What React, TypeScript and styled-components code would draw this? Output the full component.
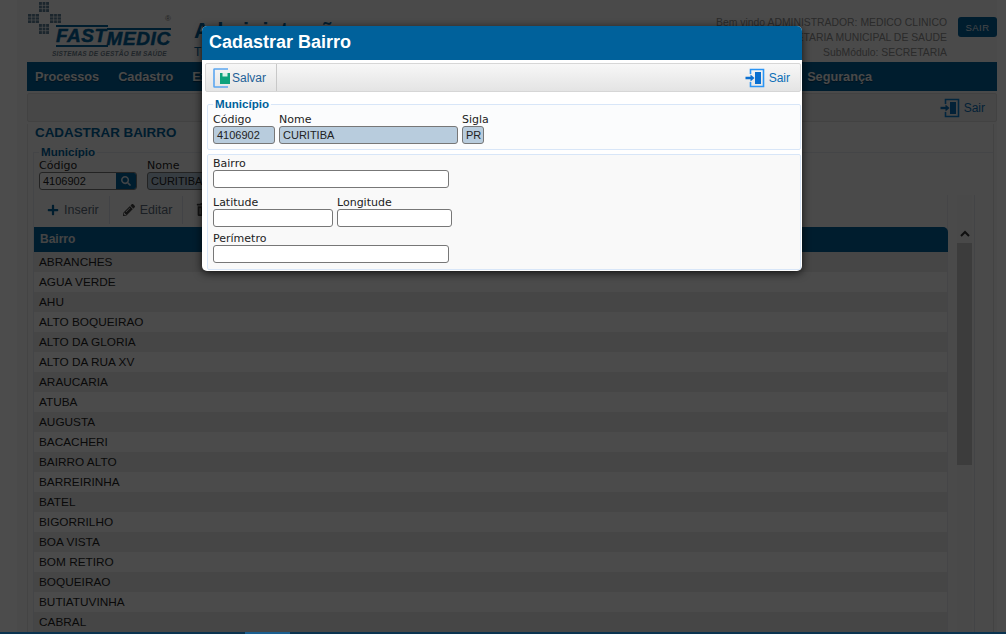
import styled, { createGlobalStyle } from 'styled-components';
import { FaPencilAlt, FaPlus, FaSearch, FaTrashAlt } from 'react-icons/fa';

const GlobalStyle = createGlobalStyle`
  html, body {
    margin: 0;
    padding: 0;
    height: 100%;
    overflow: hidden;
    background: #fff;
    font-family: "Liberation Sans", Arial, sans-serif;
  }
  * { box-sizing: border-box; }
`;

const Page = styled.div`
  width: 1006px;
  height: 634px;
  position: relative;
  overflow: hidden;
  background: #ffffff;
`;

const Shell = styled.div`
  width: 980px;
  height: 632px;
  margin-left: 17px;
  padding-left: 10px;
  background: #f8f8f8;
  overflow: hidden;
`;

const Header = styled.header`
  height: 62px;
  display: flex;
  align-items: flex-start;
  justify-content: space-between;
`;

const Logo = styled.div`
  position: relative;
  width: 145px;
  height: 62px;
`;

const LogoMark = styled.svg`
  position: absolute;
  left: 0;
  top: 0;
`;

const LogoName = styled.div`
  position: absolute;
  left: 29px;
  top: 25px;
  display: flex;
  align-items: flex-start;
  color: #00619b;
  font-weight: 700;
  font-style: italic;
  white-space: nowrap;
  -webkit-text-stroke: 0.5px #00619b;
`;

const LogoFast = styled.span`
  font-size: 19px;
  line-height: 18px;
  letter-spacing: 0.5px;
  border-top: 2px solid #00619b;
  border-bottom: 2px solid #00619b;
  padding-right: 1px;
`;

const LogoMedic = styled.span`
  font-size: 19px;
  line-height: 18px;
  margin-top: 3px;
  letter-spacing: 0.6px;
  border-top: 2px solid #00619b;
  margin-left: -1px;
`;

const LogoTag = styled.div`
  position: absolute;
  left: 25px;
  top: 49px;
  color: #6d7f8c;
  font-size: 6.5px;
  line-height: 9px;
  font-weight: 700;
  font-style: italic;
  letter-spacing: 0.2px;
  white-space: nowrap;
`;

const LogoReg = styled.span`
  position: absolute;
  left: 138px;
  top: 14px;
  color: #777;
  font-size: 8px;
`;

const AppTitle = styled.div`
  flex: 1;
  padding: 20px 0 0 22px;
  color: #00619b;
  font-size: 22px;
  line-height: 22px;
  font-weight: 700;
  white-space: nowrap;
`;

const AppSubtitle = styled.div`
  margin-top: 4px;
  color: #00619b;
  font-size: 12px;
  line-height: 12px;
  font-weight: 400;
`;

const UserBox = styled.div`
  display: flex;
  align-items: flex-start;
  gap: 11px;
  padding-top: 15px;
`;

const UserLines = styled.div`
  color: #8f8f8f;
  font-size: 10.4px;
  line-height: 15px;
  text-align: right;
  white-space: nowrap;
`;

const TopExit = styled.button`
  width: 39px;
  height: 20px;
  margin-top: 2px;
  border: 0;
  border-radius: 3px;
  background: #00619b;
  color: #e0e8ef;
  font-family: "Liberation Sans", Arial, sans-serif;
  font-size: 9.5px;
  letter-spacing: 0.5px;
  padding: 0;
`;

const Nav = styled.nav`
  height: 29px;
  background: #00619b;
  display: flex;
  align-items: center;
  padding-left: 8px;
  gap: 19px;
`;

const NavItem = styled.span<{ $left?: number }>`
  color: #f4f4f4;
  font-size: 12.7px;
  font-weight: 700;
  white-space: nowrap;
  margin-left: ${({ $left }) => $left ?? 0}px;
  text-shadow: 0 1px 1px rgba(0, 0, 0, 0.4);
`;

const ActionBar = styled.div`
  height: 29px;
  margin-top: 2px;
  border: 1px solid #dcdcdc;
  border-radius: 2px;
  background: #efefef;
  display: flex;
  align-items: center;
  justify-content: flex-end;
  padding-right: 11px;
`;

const ExitLabel = styled.span<{ $color: string }>`
  color: ${({ $color }) => $color};
  font-size: 12px;
  margin-left: 4px;
`;

const Section = styled.section`
  margin-top: 2px;
  width: 967px;
  height: 512px;
  padding: 0 0 0 5px;
  border-left: 1px solid #e4e4e4;
  border-right: 1px solid #e2e2e2;
`;

const SectionTitle = styled.h2`
  margin: 0 0 0 2px;
  color: #00619b;
  font-size: 13.4px;
  line-height: 18px;
  font-weight: 700;
`;

const CityFieldset = styled.fieldset`
  margin: 4px 0 0;
  padding: 1px 0 0 5px;
  height: 49px;
  border: 1px solid #e4e8ee;
  border-width: 1px 0 0 1px;
  min-width: 0;
`;

const CityLegend = styled.legend`
  margin-left: 0;
  padding: 0 2px;
  color: #00619b;
  font-size: 11.6px;
  line-height: 12px;
  font-weight: 700;
`;

const FieldRow = styled.div<{ $gap?: number }>`
  display: flex;
  align-items: flex-start;
  gap: ${({ $gap }) => $gap ?? 4}px;
`;

const Field = styled.label<{ $width: number }>`
  display: block;
  width: ${({ $width }) => $width}px;
  flex: none;
`;

const FieldLabel = styled.span`
  display: block;
  color: #222;
  font-family: "DejaVu Sans", Verdana, sans-serif;
  font-size: 11px;
  line-height: 13px;
`;

const TextBox = styled.div<{ $readonly?: boolean }>`
  height: 18px;
  border: 1px solid #777;
  border-radius: 3px;
  background: ${({ $readonly }) => ($readonly ? '#b8ccdd' : '#ffffff')};
  color: #222;
  font-size: 11px;
  line-height: 16px;
  padding: 0 3px;
  white-space: nowrap;
  overflow: hidden;
`;

const SearchBox = styled(TextBox)`
  position: relative;
  padding-right: 22px;
`;

const SearchButton = styled.span`
  position: absolute;
  top: 0;
  right: 0;
  width: 20px;
  height: 16px;
  background: #00619b;
  color: #d8e2ea;
  display: flex;
  align-items: center;
  justify-content: center;
  font-size: 10px;
`;

const ListArea = styled.div`
  display: flex;
  height: 438px;
  width: 942px;
  border-left: 1px solid #e4e8ee;
  border-right: 1px solid #dfe3ea;
`;

const ListMain = styled.div`
  width: 914px;
  flex: none;
  border-right: 1px solid #e6e8ee;
`;

const ListToolbar = styled.div`
  height: 29px;
  margin-bottom: 3px;
  display: flex;
  align-items: center;
  font-size: 12.5px;
`;

const ListTool = styled.span`
  display: flex;
  align-items: center;
  gap: 5px;
  height: 28px;
  padding: 0 10px 0 13px;
  border-right: 1px solid #dde2ea;
  color: #5a6a78;
  svg { color: #00619b; font-size: 12px; }
`;

const PencilTool = styled(ListTool)`
  svg { color: #444; }
`;

const TrashTool = styled(ListTool)`
  border-right: 0;
  svg { color: #444; font-size: 13px; }
`;

const TableHead = styled.div`
  height: 25px;
  margin-right: -1px;
  background: #00619b;
  color: #e4e4e4;
  font-size: 12px;
  font-weight: 700;
  line-height: 25px;
  padding-left: 6px;
  border-radius: 0 5px 0 0;
`;

const Row = styled.div<{ $shade: boolean }>`
  height: 20px;
  line-height: 20px;
  padding-left: 5px;
  color: #1f1f1f;
  font-size: 11.8px;
  background: ${({ $shade }) => ($shade ? '#ebebeb' : '#fafafa')};
`;

const ScrollTrack = styled.div`
  width: 15px;
  margin-left: 9px;
  flex: none;
  background: #f4f4f4;
`;

const ScrollUp = styled.svg`
  display: block;
  margin: 35px auto 6px;
`;

const ScrollThumb = styled.div`
  height: 222px;
  background: #c9c9c9;
`;

const Overlay = styled.div`
  position: absolute;
  inset: 0;
  background: rgba(0, 0, 0, 0.7);
`;

const BottomStrip = styled.div`
  position: absolute;
  left: 0;
  right: 0;
  bottom: 0;
  height: 2px;
  background: #0b3450;
`;

const BottomMark = styled.div`
  position: absolute;
  left: 245px;
  width: 45px;
  bottom: 0;
  height: 2px;
  background: #1b5f90;
`;

const Modal = styled.div`
  position: absolute;
  left: 202px;
  top: 26px;
  width: 600px;
  height: 245px;
  background: #ffffff;
  border-radius: 5px;
  overflow: hidden;
  box-shadow: 0 2px 8px rgba(0, 0, 0, 0.75);
`;

const ModalHeader = styled.div`
  height: 34px;
  background: #00619b;
  color: #ffffff;
  font-size: 18px;
  font-weight: 700;
  line-height: 33px;
  padding-left: 7px;
`;

const ModalBar = styled.div`
  height: 29px;
  margin: 3px 1px 0 3px;
  border: 1px solid #d6d6d6;
  border-radius: 2px;
  background: linear-gradient(#f7f7f7, #e4e4e4);
  display: flex;
  align-items: center;
  justify-content: space-between;
`;

const SaveButton = styled.div`
  height: 27px;
  width: 71px;
  display: flex;
  align-items: center;
  gap: 1px;
  padding-left: 7px;
  border-right: 1px solid #c8c8c8;
  color: #1f5f97;
  font-size: 12px;
`;

const ExitButton = styled.div`
  display: flex;
  align-items: center;
  padding-right: 10px;
`;

const ModalBody = styled.div`
  padding: 7px 1px 0 5px;
`;

const ModalFieldset = styled.fieldset`
  margin: 0;
  padding: 4px 0 0 5px;
  height: 51px;
  border: 1px solid #d8e6f8;
  border-radius: 2px;
  min-width: 0;
  background: #fbfcfd;
`;

const ModalLegend = styled.legend`
  margin-left: 0;
  padding: 0 2px;
  color: #00619b;
  font-size: 11.6px;
  line-height: 10px;
  font-weight: 700;
`;

const FormPanel = styled.div`
  margin-top: 4px;
  height: 116px;
  padding: 2px 5px;
  border: 1px solid #d8e6f8;
  border-radius: 2px;
  background: #f9f9f9;
  display: flex;
  flex-direction: column;
  gap: 8px;
`;

const TightField = styled(Field)`
  margin-top: -3px;
`;

const ExitIcon = ({ color, frame }: { color: string; frame: string }) => (
  <svg width="20" height="20" viewBox="0 0 20 20" fill="none">
    <path d="M5.5 6V1.5H18.5V18.5H5.5V14" stroke={frame} strokeWidth="1.6" />
    <path d="M10 4H16V16H10Z" fill={color} />
    <path d="M0.5 10H6" stroke={color} strokeWidth="2.4" />
    <path d="M5.5 6.5L9.5 10L5.5 13.5Z" fill={color} />
  </svg>
);

const SaveIcon = () => (
  <svg width="18" height="20" viewBox="0 0 18 20" fill="none">
    <path d="M15 1H1.5Q1 1 1 1.5V18.5Q1 19 1.5 19H15" stroke="#5ba6f0" strokeWidth="1.6" />
    <path d="M7 5H17V16H7Z" fill="#0ea27c" />
    <path d="M9.5 5H14.5V8.5H9.5Z" fill="#d8f2e8" />
  </svg>
);

const LogoCross = () => {
  const squares = [
    [12, 2, 10, 10],
    [1, 14, 11, 9],
    [23, 14, 11, 9],
    [12, 24, 10, 10],
  ];
  return (
    <LogoMark width="36" height="36" viewBox="0 0 36 36">
      {squares.map(([x, y, w, h]) => (
        <g key={`${x}-${y}`}>
          <rect x={x} y={y} width={w} height={h} fill="#5f7f96" />
          <path
            d={`M${x} ${y + h / 3}H${x + w}M${x} ${y + (2 * h) / 3}H${x + w}M${x + w / 3} ${y}V${y + h}M${x + (2 * w) / 3} ${y}V${y + h}`}
            stroke="#fff"
            strokeWidth="0.7"
          />
        </g>
      ))}
    </LogoMark>
  );
};

const bairros = [
  'ABRANCHES', 'AGUA VERDE', 'AHU', 'ALTO BOQUEIRAO', 'ALTO DA GLORIA', 'ALTO DA RUA XV',
  'ARAUCARIA', 'ATUBA', 'AUGUSTA', 'BACACHERI', 'BAIRRO ALTO', 'BARREIRINHA', 'BATEL',
  'BIGORRILHO', 'BOA VISTA', 'BOM RETIRO', 'BOQUEIRAO', 'BUTIATUVINHA', 'CABRAL',
];

export default function App() {
  return (
    <Page>
      <GlobalStyle />
      <Shell>
        <Header>
          <Logo>
            <LogoCross />
            <LogoName>
              <LogoFast>FAST</LogoFast>
              <LogoMedic>MEDIC</LogoMedic>
            </LogoName>
            <LogoTag>SISTEMAS DE GESTÃO EM SAÚDE</LogoTag>
            <LogoReg>®</LogoReg>
          </Logo>
          <AppTitle>
            Administração
            <AppSubtitle>TFD</AppSubtitle>
          </AppTitle>
          <UserBox>
            <UserLines>
              Bem vindo ADMINISTRADOR: MEDICO CLINICO
              <br />
              SECRETARIA MUNICIPAL DE SAUDE
              <br />
              SubMódulo: SECRETARIA
            </UserLines>
            <TopExit>SAIR</TopExit>
          </UserBox>
        </Header>
        <Nav>
          <NavItem>Processos</NavItem>
          <NavItem>Cadastro</NavItem>
          <NavItem>Exames</NavItem>
          <NavItem $left={548}>Segurança</NavItem>
        </Nav>
        <ActionBar>
          <ExitIcon color="#0a6fb8" frame="#0a7fd0" />
          <ExitLabel $color="#0a6fb8">Sair</ExitLabel>
        </ActionBar>
        <Section>
          <SectionTitle>CADASTRAR BAIRRO</SectionTitle>
          <CityFieldset>
            <CityLegend>Município</CityLegend>
            <FieldRow $gap={10}>
              <Field $width={98}>
                <FieldLabel>Código</FieldLabel>
                <SearchBox>
                  4106902
                  <SearchButton><FaSearch /></SearchButton>
                </SearchBox>
              </Field>
              <Field $width={200}>
                <FieldLabel>Nome</FieldLabel>
                <TextBox $readonly>CURITIBA</TextBox>
              </Field>
            </FieldRow>
          </CityFieldset>
          <ListArea>
            <ListMain>
              <ListToolbar>
                <ListTool><FaPlus />Inserir</ListTool>
                <PencilTool><FaPencilAlt />Editar</PencilTool>
                <TrashTool><FaTrashAlt />Excluir</TrashTool>
              </ListToolbar>
              <TableHead>Bairro</TableHead>
              {bairros.map((name, i) => (
                <Row key={name} $shade={i % 2 === 0}>{name}</Row>
              ))}
            </ListMain>
            <ScrollTrack>
              <ScrollUp width="10" height="7" viewBox="0 0 10 7">
                <path d="M1 6L5 2L9 6" stroke="#333" strokeWidth="2" fill="none" />
              </ScrollUp>
              <ScrollThumb />
            </ScrollTrack>
          </ListArea>
        </Section>
      </Shell>
      <Overlay />
      <BottomStrip />
      <BottomMark />
      <Modal>
        <ModalHeader>Cadastrar Bairro</ModalHeader>
        <ModalBar>
          <SaveButton><SaveIcon />Salvar</SaveButton>
          <ExitButton>
            <ExitIcon color="#0a6fd0" frame="#2a95f5" />
            <ExitLabel $color="#0a6fb8">Sair</ExitLabel>
          </ExitButton>
        </ModalBar>
        <ModalBody>
          <ModalFieldset>
            <ModalLegend>Município</ModalLegend>
            <FieldRow>
              <Field $width={62}>
                <FieldLabel>Código</FieldLabel>
                <TextBox $readonly>4106902</TextBox>
              </Field>
              <Field $width={179}>
                <FieldLabel>Nome</FieldLabel>
                <TextBox $readonly>CURITIBA</TextBox>
              </Field>
              <Field $width={22}>
                <FieldLabel>Sigla</FieldLabel>
                <TextBox $readonly>PR</TextBox>
              </Field>
            </FieldRow>
          </ModalFieldset>
          <FormPanel>
            <Field $width={236}>
              <FieldLabel>Bairro</FieldLabel>
              <TextBox />
            </Field>
            <FieldRow>
              <Field $width={120}>
                <FieldLabel>Latitude</FieldLabel>
                <TextBox />
              </Field>
              <Field $width={115}>
                <FieldLabel>Longitude</FieldLabel>
                <TextBox />
              </Field>
            </FieldRow>
            <TightField $width={236}>
              <FieldLabel>Perímetro</FieldLabel>
              <TextBox />
            </TightField>
          </FormPanel>
        </ModalBody>
      </Modal>
    </Page>
  );
}
